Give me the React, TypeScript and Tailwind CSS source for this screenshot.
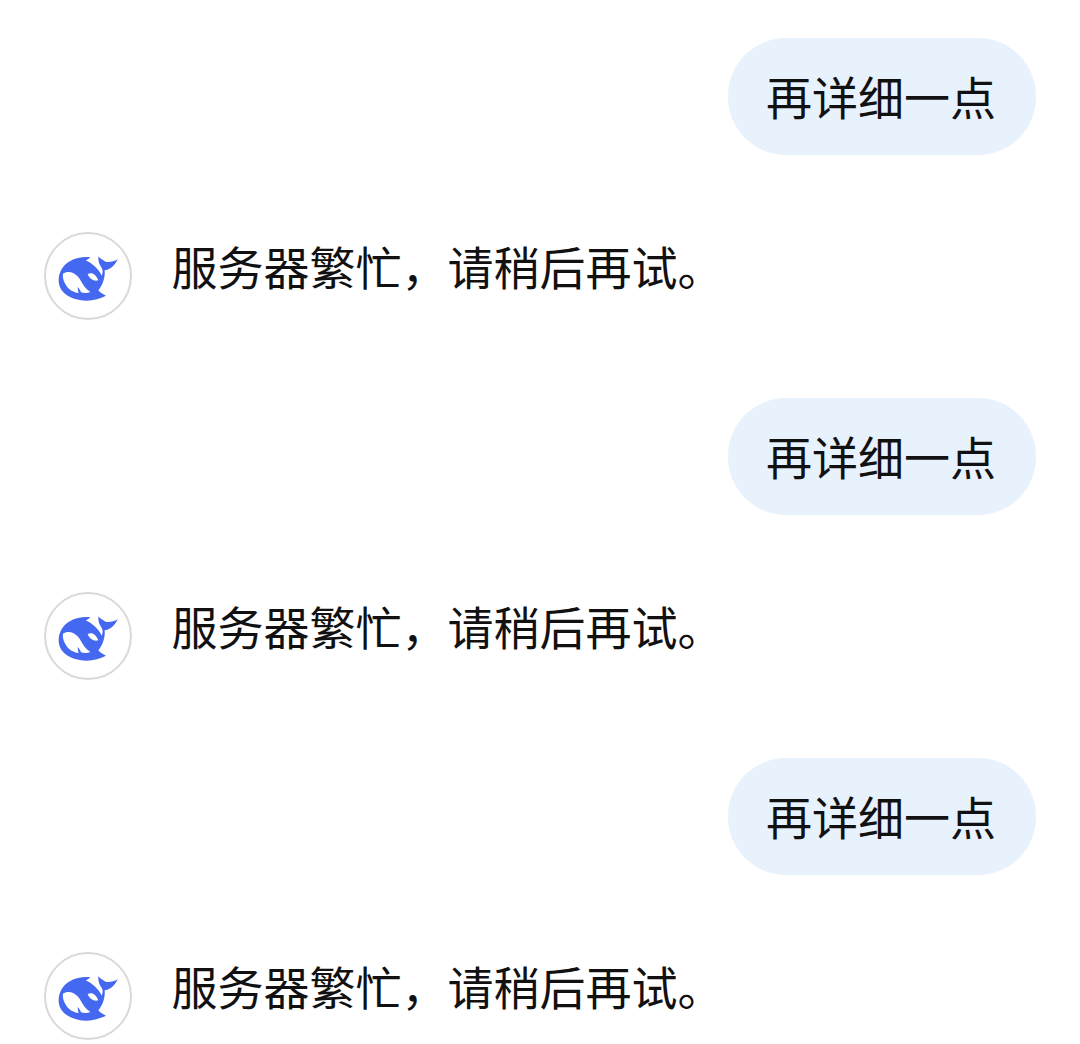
function WhaleLogo() {
  return (
    <svg viewBox="33 27 252 252" className="h-full w-full">
      {/* body */}
      <path
        fill="#4468f0"
        d="M166 97 C136 92 102 104 86 124 C68 146 66 176 80 196 C96 218 128 227 155 227 C176 227 196 220 213 212 C204 208 196 203 190 196 C203 181 211 158 209 136 C224 135 240 122 248 103 C237 110 223 112 212 110 C204 106 196 101 190 94 C189 106 192 118 199 127 C204 135 204 143 200 152 C192 134 176 118 152 106 C158 104 162 101 166 97 Z"
      />
      {/* belly */}
      <path
        fill="#ffffff"
        d="M84 146 C98 136 118 142 130 156 C142 172 146 188 166 201 C156 205 146 205 138 202 C136 196 132 190 128 186 C128 192 129 198 131 204 C116 202 102 194 94 182 C86 170 82 158 84 146 Z"
      />
      {/* eye */}
      <path fill="#ffffff" d="M158 148 C168 140 182 146 190 166 C176 170 164 162 158 148 Z" />
    </svg>
  )
}

function Exchange() {
  return (
    <>
      <div className="flex justify-end pr-[44px]">
        <div className="flex h-[117px] w-[308px] items-center justify-center rounded-[58px] bg-[#e8f2fd] pr-[2px] pb-[4px] text-[46px] leading-none text-[#111111]">
          再详细一点
        </div>
      </div>
      <div className="mt-[77px] mb-[78px] flex h-[88px] items-start pl-[44px]">
        <div className="h-[88px] w-[88px] shrink-0 rounded-full border-2 border-[#d9d9d9] bg-white">
          <WhaleLogo />
        </div>
        <div className="mt-[-3px] ml-[39.5px] text-[46px] leading-[72px] text-[#111111]">服务器繁忙，请稍后再试。</div>
      </div>
    </>
  )
}

export default function App() {
  return (
    <div className="h-[1044px] w-[1080px] overflow-hidden bg-white pt-[38px] font-['Noto_Sans_CJK_SC','Noto_Sans',sans-serif]">
      <Exchange />
      <Exchange />
      <Exchange />
    </div>
  )
}
